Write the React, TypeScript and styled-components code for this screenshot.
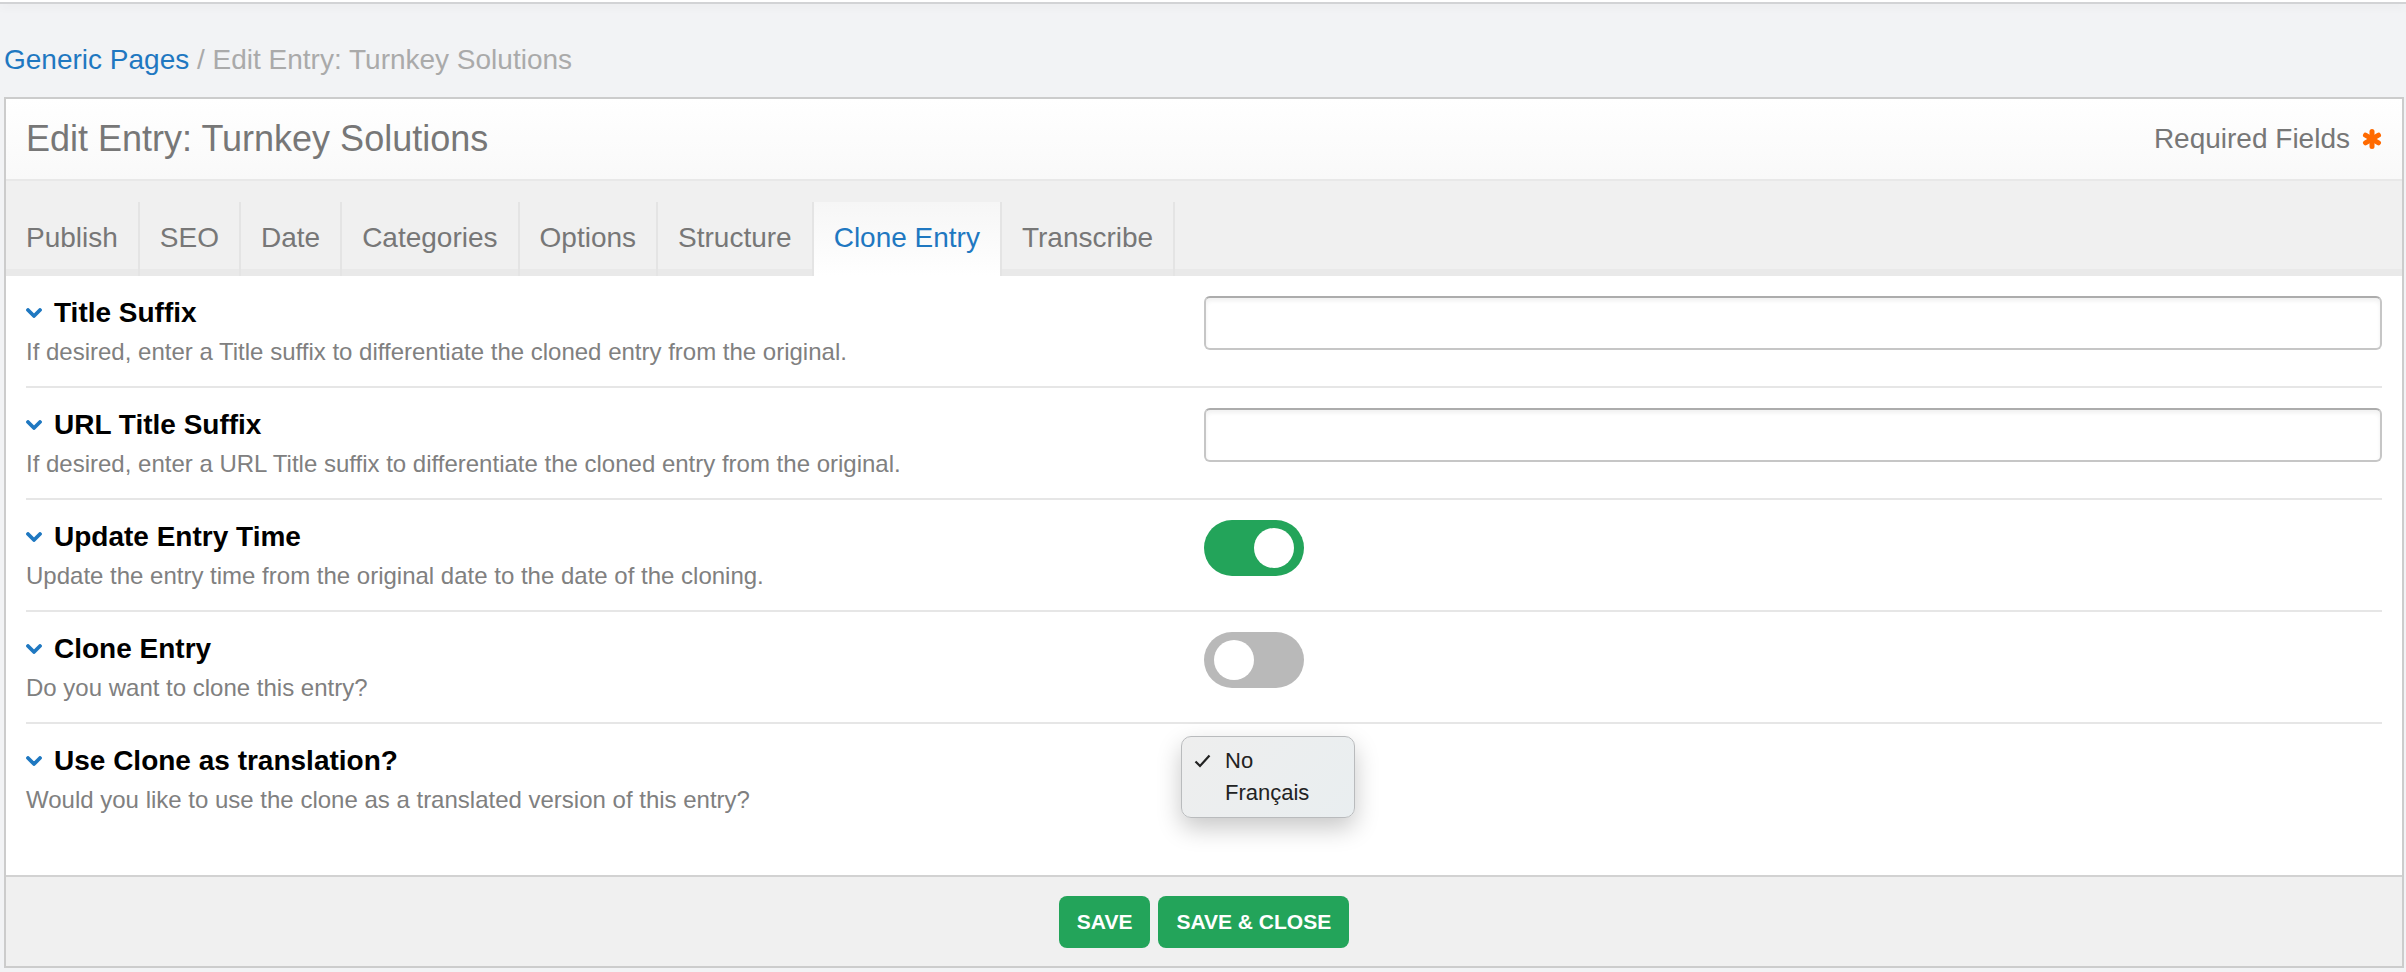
import React from 'react';
import styled, { createGlobalStyle } from 'styled-components';

const GlobalStyle = createGlobalStyle`
  html, body {
    margin: 0;
    padding: 0;
    background: #f2f3f5;
    font-family: 'Liberation Sans', Arial, Helvetica, sans-serif;
  }
`;

const colors = {
  blue: '#1f78c1',
  green: '#23a45a',
  text: '#777777',
  muted: '#808080',
  line: '#e6e6e6',
};

const TopBar = styled.div`
  height: 2px;
  background: #ffffff;
  border-bottom: 2px solid #d2d3d5;
  box-shadow: 0 3px 10px rgba(0, 0, 0, 0.05);
`;

const Page = styled.div`
  padding: 0 2px 2px 4px;
`;

const Breadcrumb = styled.div`
  margin: 36px 0 17px;
  font-size: 28px;
  line-height: 40px;
  color: #aaaaaa;
`;

const CrumbLink = styled.a`
  color: ${colors.blue};
  text-decoration: none;
`;

const Panel = styled.div`
  background: #ffffff;
  border: 2px solid #cccccc;
`;

const PanelHeader = styled.div`
  display: flex;
  align-items: center;
  justify-content: space-between;
  padding: 18px 20px;
  background: linear-gradient(#ffffff, #f9f9f9);
  border-bottom: 2px solid #e8e8e8;
`;

const PanelTitle = styled.h1`
  margin: 0;
  font-size: 36px;
  line-height: 44px;
  font-weight: normal;
  color: ${colors.text};
`;

const Required = styled.div`
  display: flex;
  align-items: center;
  gap: 12px;
  font-size: 28px;
  color: ${colors.text};
`;

const TabBar = styled.div`
  display: flex;
  padding-top: 21px;
  background: #f0f0f0;
  box-shadow: inset 0 -7px 0 #e9e9e9;
`;

const Tab = styled.div<{ $active?: boolean }>`
  padding: 19px 20px 21px;
  font-size: 28px;
  line-height: 34px;
  color: ${(p) => (p.$active ? colors.blue : colors.text)};
  background: ${(p) => (p.$active ? 'linear-gradient(#f6f6f6, #ffffff)' : 'transparent')};
  border-right: 2px solid #e4e4e4;
  cursor: pointer;
`;

const Body = styled.div`
  padding: 0 20px 41px;
`;

const FieldRow = styled.div`
  display: grid;
  grid-template-columns: 1fr 1fr;
  padding: 20px 0 19px;
  border-bottom: 2px solid ${colors.line};
  &:last-child {
    border-bottom: none;
  }
`;

const FieldLabel = styled.div`
  display: flex;
  align-items: center;
  gap: 12px;
  font-size: 28px;
  line-height: 34px;
  font-weight: bold;
  color: #000000;
`;

const FieldDesc = styled.div`
  margin-top: 7px;
  font-size: 24px;
  line-height: 30px;
  color: ${colors.muted};
`;

const FieldControl = styled.div`
  position: relative;
`;

const TextInput = styled.input`
  display: block;
  box-sizing: border-box;
  width: 100%;
  height: 54px;
  border: 2px solid #c6c6c6;
  border-top-color: #acacac;
  border-radius: 6px;
  box-shadow: inset 0 3px 4px rgba(0, 0, 0, 0.06);
  background: #ffffff;
  font-size: 24px;
  padding: 0 12px;
  outline: none;
`;

const Toggle = styled.div<{ $on?: boolean }>`
  display: flex;
  align-items: center;
  justify-content: ${(p) => (p.$on ? 'flex-end' : 'flex-start')};
  box-sizing: border-box;
  width: 100px;
  height: 56px;
  padding: 0 10px;
  border-radius: 28px;
  background: ${(p) => (p.$on ? colors.green : '#b9b9b9')};
`;

const Knob = styled.span`
  width: 40px;
  height: 40px;
  border-radius: 50%;
  background: #ffffff;
`;

const SelectMenu = styled.div`
  position: absolute;
  top: -8px;
  left: -23px;
  box-sizing: border-box;
  width: 174px;
  padding: 8px 0;
  border: 1px solid #b9bbbd;
  border-radius: 10px;
  background: linear-gradient(135deg, #eeeeee, #e9eef0);
  box-shadow: 0 10px 24px rgba(0, 0, 0, 0.22);
  font-size: 22px;
  line-height: 32px;
  color: #222222;
`;

const MenuItem = styled.div`
  display: flex;
  align-items: center;
  padding-left: 12px;
`;

const Check = styled.span`
  display: inline-flex;
  width: 31px;
`;

const Footer = styled.div`
  display: flex;
  justify-content: center;
  gap: 8px;
  padding: 19px 0 18px;
  background: #f0f0f0;
  border-top: 2px solid #d2d2d2;
`;

const Button = styled.button`
  height: 52px;
  padding: 0 18px;
  border: none;
  border-radius: 8px;
  background: ${colors.green};
  color: #ffffff;
  font-family: inherit;
  font-size: 21px;
  font-weight: bold;
  cursor: pointer;
`;

const Chevron = () => (
  <svg width="16" height="10" viewBox="0 0 16 10">
    <polyline
      points="2,2 8,8 14,2"
      fill="none"
      stroke={colors.blue}
      strokeWidth="3.8"
      strokeLinecap="round"
      strokeLinejoin="round"
    />
  </svg>
);

const Asterisk = () => (
  <svg width="20" height="20" viewBox="0 0 20 20">
    <g stroke="#ff6a00" strokeWidth="5" strokeLinecap="round">
      <line x1="10" y1="2.5" x2="10" y2="17.5" />
      <line x1="3.5" y1="6.2" x2="16.5" y2="13.8" />
      <line x1="3.5" y1="13.8" x2="16.5" y2="6.2" />
    </g>
  </svg>
);

const CheckMark = () => (
  <svg width="17" height="14" viewBox="0 0 17 14">
    <polyline points="1.5,7.5 6,12 15.5,1.5" fill="none" stroke="#222" strokeWidth="2.2" />
  </svg>
);

const tabs = ['Publish', 'SEO', 'Date', 'Categories', 'Options', 'Structure', 'Clone Entry', 'Transcribe'];

type FieldProps = {
  label: string;
  desc: string;
  children?: React.ReactNode;
};

const Field = ({ label, desc, children }: FieldProps) => (
  <FieldRow>
    <div>
      <FieldLabel>
        <Chevron />
        {label}
      </FieldLabel>
      <FieldDesc>{desc}</FieldDesc>
    </div>
    <FieldControl>{children}</FieldControl>
  </FieldRow>
);

const App = () => {
  return (
    <>
      <GlobalStyle />
      <TopBar />
      <Page>
        <Breadcrumb>
          <CrumbLink href="#">Generic Pages</CrumbLink> / Edit Entry: Turnkey Solutions
        </Breadcrumb>
        <Panel>
          <PanelHeader>
            <PanelTitle>Edit Entry: Turnkey Solutions</PanelTitle>
            <Required>
              Required Fields
              <Asterisk />
            </Required>
          </PanelHeader>
          <TabBar>
            {tabs.map((t) => (
              <Tab key={t} $active={t === 'Clone Entry'}>
                {t}
              </Tab>
            ))}
          </TabBar>
          <Body>
            <Field
              label="Title Suffix"
              desc="If desired, enter a Title suffix to differentiate the cloned entry from the original."
            >
              <TextInput type="text" />
            </Field>
            <Field
              label="URL Title Suffix"
              desc="If desired, enter a URL Title suffix to differentiate the cloned entry from the original."
            >
              <TextInput type="text" />
            </Field>
            <Field
              label="Update Entry Time"
              desc="Update the entry time from the original date to the date of the cloning."
            >
              <Toggle $on>
                <Knob />
              </Toggle>
            </Field>
            <Field label="Clone Entry" desc="Do you want to clone this entry?">
              <Toggle>
                <Knob />
              </Toggle>
            </Field>
            <Field
              label="Use Clone as translation?"
              desc="Would you like to use the clone as a translated version of this entry?"
            >
              <SelectMenu>
                <MenuItem>
                  <Check>
                    <CheckMark />
                  </Check>
                  No
                </MenuItem>
                <MenuItem>
                  <Check />
                  Français
                </MenuItem>
              </SelectMenu>
            </Field>
          </Body>
          <Footer>
            <Button>SAVE</Button>
            <Button>SAVE &amp; CLOSE</Button>
          </Footer>
        </Panel>
      </Page>
    </>
  );
};

export default App;
